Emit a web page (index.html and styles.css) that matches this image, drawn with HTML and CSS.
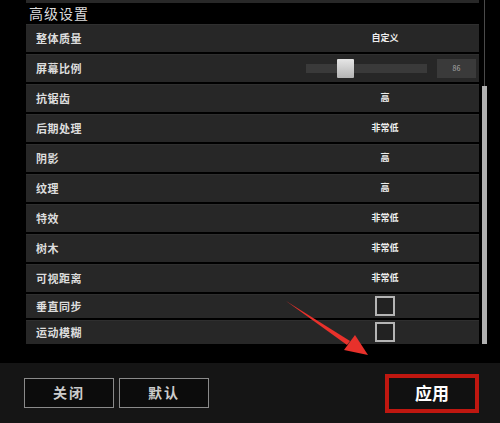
FILE: index.html
```html
<!doctype html>
<html lang="zh-CN">
<head>
	<meta charset="UTF-8" />
	<title>高级设置</title>
<link rel="stylesheet" href="styles.css">
</head>
<body>
	<section id="wrap">
		<div class="panel">
			<div class="list">
				<div class="stub"></div>
				<h2 class="title">高级设置</h2>
				<div class="row"><span class="label">整体质量</span><span class="val">自定义</span></div>
				<div class="row slider-row">
					<span class="label">屏幕比例</span>
					<div class="track"><i class="knob"></i></div>
					<div class="num">86</div>
				</div>
				<div class="row"><span class="label">抗锯齿</span><span class="val">高</span></div>
				<div class="row"><span class="label">后期处理</span><span class="val">非常低</span></div>
				<div class="row"><span class="label">阴影</span><span class="val">高</span></div>
				<div class="row"><span class="label">纹理</span><span class="val">高</span></div>
				<div class="row"><span class="label">特效</span><span class="val">非常低</span></div>
				<div class="row"><span class="label">树木</span><span class="val">非常低</span></div>
				<div class="row"><span class="label">可视距离</span><span class="val">非常低</span></div>
				<div class="row small"><span class="label">垂直同步</span><span class="val"><i class="check"></i></span></div>
				<div class="row small"><span class="label">运动模糊</span><span class="val"><i class="check"></i></span></div>
			</div>
			<div class="scroll"><i class="thumb"></i></div>
		</div>
		<div class="footer">
			<a href="javascript:;" class="btn">关闭</a>
			<a href="javascript:;" class="btn">默认</a>
			<a href="javascript:;" class="apply">应用</a>
		</div>
		<svg class="arrow" width="500" height="423" viewBox="0 0 500 423">
			<polygon points="286,301 350,341 347,345" fill="#e8312b"/>
			<polygon points="368,355 344,350 355,335" fill="#e8312b"/>
		</svg>
	</section>
</body>
</html>
```

FILE: styles.css
```css
*{
	margin: 0;
	padding: 0;
}
body{
	background: #000;
	font-family: "Noto Sans CJK SC", "Noto Sans", sans-serif;
}
#wrap{
	width: 500px;
	height: 423px;
	position: relative;
	overflow: hidden;
}
.panel{
	display: flex;
	height: 363px;
	padding-left: 26px;
}
.list{
	width: 453px;
}
.stub{
	height: 3px;
	background: #282828;
}
.title{
	height: 21px;
	line-height: 20px;
	padding-left: 3px;
	font-size: 14px;
	font-weight: normal;
	letter-spacing: 1px;
	color: #ddd;
}
.row{
	display: flex;
	align-items: center;
	height: 28px;
	margin-bottom: 2px;
	padding-left: 10px;
	padding-bottom: 2px;
	background: #272727;
	border-top: 1px solid #2f2f2f;
	box-sizing: border-box;
}
.row.small{
	height: 24px;
}
.label{
	width: 271px;
	font-size: 11px;
	font-weight: bold;
	letter-spacing: 0.5px;
	color: #ddd;
}
.val{
	width: 156px;
	display: flex;
	justify-content: center;
	font-size: 9px;
	font-weight: bold;
	color: #eee;
}
.slider-row{
	padding-right: 3px;
	padding-bottom: 1px;
}
.slider-row .label{
	flex: 1;
	width: auto;
}
.track{
	width: 121px;
	height: 9px;
	background: #3a3a3a;
	display: flex;
	align-items: center;
	padding-left: 31px;
	box-sizing: border-box;
}
.knob{
	width: 17px;
	height: 19px;
	background: linear-gradient(#e6e6e6, #b4b4b4);
	border-radius: 1px;
}
.num{
	width: 39px;
	height: 19px;
	margin-left: 10px;
	background: #3a3a3a;
	font-size: 7px;
	line-height: 19px;
	text-align: center;
	color: #aaa;
}
.check{
	width: 16px;
	height: 16px;
	border: 2px solid #b5b5b5;
	background: #222;
}
.scroll{
	width: 5px;
	margin-left: 3px;
	height: 344px;
	position: relative;
	background: linear-gradient(to right, transparent 2px, #4a4a4a 2px, #4a4a4a 3px, transparent 3px);
}
.thumb{
	display: block;
	margin-top: 86px;
	width: 5px;
	height: 258px;
	background: #b0b0b0;
}
.footer{
	display: flex;
	align-items: center;
	height: 60px;
	padding: 0 21px 0 24px;
	background: #151515;
}
.btn{
	display: block;
	width: 90px;
	height: 30px;
	margin-right: 5px;
	box-sizing: border-box;
	border: 1px solid #8a8a8a;
	background: #0c0c0c;
	font-size: 14px;
	font-weight: bold;
	line-height: 27px;
	letter-spacing: 2px;
	text-align: center;
	color: #ccc;
	text-decoration: none;
}
.apply{
	display: block;
	margin-left: auto;
	width: 94px;
	height: 39px;
	box-sizing: border-box;
	border: 4px solid #bf1710;
	background: #111;
	font-size: 17px;
	font-weight: bold;
	line-height: 30px;
	text-align: center;
	color: #fff;
	text-decoration: none;
}
.arrow{
	position: absolute;
	left: 0;
	top: 0;
	pointer-events: none;
}
```
